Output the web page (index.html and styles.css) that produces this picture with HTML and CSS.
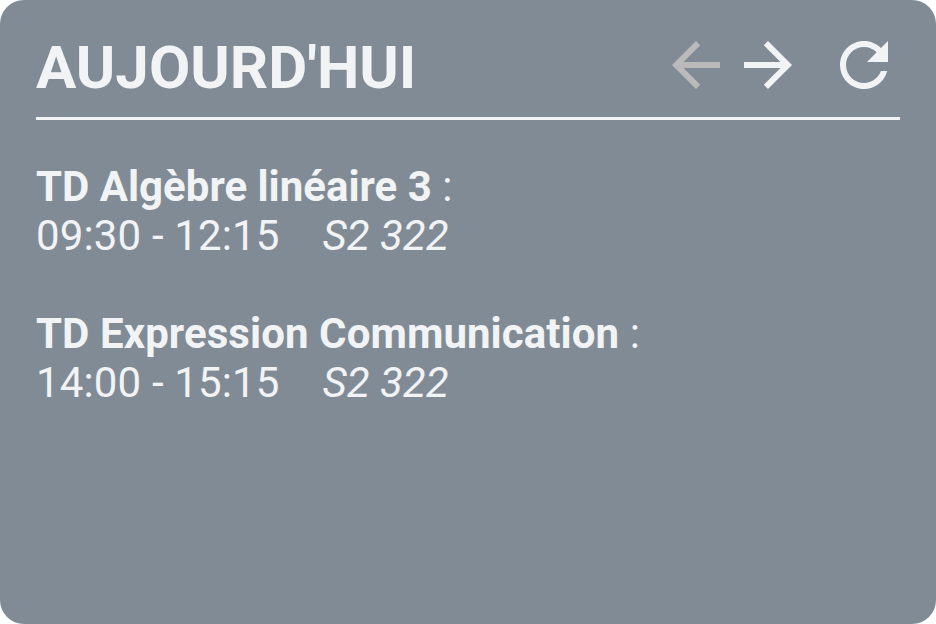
FILE: index.html
```html
<!DOCTYPE html>
<html lang="fr">
<head>
<meta charset="utf-8">
<title>Aujourd'hui</title>
<link rel="stylesheet" href="styles.css">
</head>
<body>
<main class="widget">
  <header class="header">
    <h1 class="title">AUJOURD'HUI</h1>
    <nav class="actions">
      <svg class="icon disabled" viewBox="0 0 24 24"><path d="M20 11H7.83l5.59-5.59L12 4l-8 8 8 8 1.41-1.41L7.83 13H20v-2z"/></svg>
      <svg class="icon" viewBox="0 0 24 24"><path d="M12 4l-1.41 1.41L16.17 11H4v2h12.17l-5.58 5.59L12 20l8-8z"/></svg>
      <svg class="icon refresh" viewBox="0 0 24 24"><path d="M17.65 6.35C16.2 4.9 14.21 4 12 4c-4.42 0-7.99 3.58-7.99 8s3.57 8 7.99 8c3.73 0 6.84-2.55 7.73-6h-2.08c-.82 2.33-3.04 4-5.65 4-3.31 0-6-2.69-6-6s2.69-6 6-6c1.66 0 3.14.69 4.22 1.78L13 11h7V4l-2.35 2.35z"/></svg>
    </nav>
  </header>
  <section class="list">
    <article class="course"><p><b>TD Algèbre linéaire 3</b> :</p><p class="details"><span>09:30 - 12:15</span><i>S2 322</i></p></article>
    <article class="course"><p><b class="wide">TD Expression Communication</b> :</p><p class="details"><span>14:00 - 15:15</span><i>S2 322</i></p></article>
  </section>
</main>
</body>
</html>
```
FILE: styles.css
```css
* { box-sizing: border-box; margin: 0; }
body { background: #fff; font-family: Roboto, sans-serif; color: #f1f3f5; }
.widget { height: 624px; padding: 0 36px; border-radius: 24px; background: #818b95; overflow: hidden; }
.header { display: flex; justify-content: space-between; height: 120px; border-bottom: 3px solid #f1f3f5; }
.title { font-size: 60px; font-weight: 700; line-height: 70px; padding-top: 33px; white-space: nowrap; }
.actions { display: flex; padding-top: 29px; }
.icon { width: 72px; height: 72px; fill: #f1f3f5; }
.disabled { fill: #bababa; }
.refresh { margin-left: 24px; }
.list { padding-top: 42px; font-size: 42px; line-height: 49px; }
.course { margin-bottom: 49px; }
.details { display: flex; gap: 43px; }
.details span { letter-spacing: 0.15px; }
.wide { letter-spacing: 0.08px; }
```
